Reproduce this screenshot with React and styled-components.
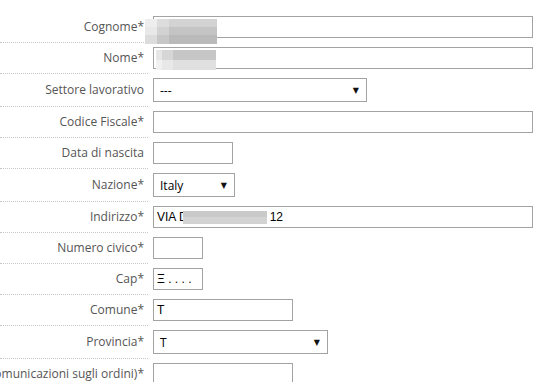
import React from 'react'
import styled, { createGlobalStyle } from 'styled-components'

const GlobalStyle = createGlobalStyle`
    html, body {
        margin: 0;
        padding: 0;
        background: #fff;
        overflow: hidden;
    }
    body {
        font-family: "Open Sans", "DejaVu Sans", sans-serif;
    }
`

const Form = styled.div`
    padding-top: 12px;
    width: 555px;
`

const Row = styled.div`
    display: grid;
    grid-template-columns: 148px 1fr;
`

const Label = styled.div`
    display: flex;
    align-items: center;
    justify-content: flex-end;
    overflow: hidden;
    white-space: nowrap;
    padding: 0 4px 1px 0;
    border-bottom: 1px dotted #c8c8c8;
    font-size: 12px;
    color: #555;
`

const Field = styled.div`
    position: relative;
    display: flex;
    align-items: center;
    padding: 4px 0 5px 5px;
`

const Input = styled.div`
    box-sizing: border-box;
    width: ${p => p.$w}px;
    height: 22px;
    border: 1px solid #a3a3a3;
    padding: 0 3px;
    display: flex;
    align-items: center;
    overflow: hidden;
    font-family: "Liberation Sans", Arial, sans-serif;
    font-size: 12px;
    color: #000;
    white-space: pre;
`

const Gap = styled.span`
    display: inline-block;
    width: ${p => p.$w}px;
`

const Select = styled.div`
    box-sizing: border-box;
    width: ${p => p.$w}px;
    height: 24px;
    border: 1px solid #a3a3a3;
    padding: 0 7px 0 6px;
    display: flex;
    align-items: center;
    justify-content: space-between;
    font-size: 12px;
    color: #000;
`

const Arrow = styled.span`
    font-size: 8px;
    line-height: 1;
    color: #111;
`

const Redact = styled.div`
    position: absolute;
    left: ${p => p.$x}px;
    top: ${p => p.$y}px;
    width: ${p => p.$w}px;
    height: ${p => p.$h}px;
    background: ${p => p.$bg};
`

const address = <>VIA D<Gap $w={82} />12</>

const rows = [
    { label: 'Cognome*', kind: 'input', w: 380, redact: { x: -3, y: 7, w: 72, h: 25, bg: 'linear-gradient(to bottom, rgba(255,255,255,0.25) 0 8px, rgba(0,0,0,0) 8px 16px, rgba(0,0,0,0.05) 16px), linear-gradient(to right, #e8e8e8 0 12px, #d2d2d2 12px 24px, #c4c4c4 24px)' } },
    { label: 'Nome*', kind: 'input', w: 380, redact: { x: 8, y: 7, w: 60, h: 20, bg: 'linear-gradient(to bottom, rgba(0,0,0,0) 0 10px, rgba(255,255,255,0.45) 10px), linear-gradient(to right, #e6e6e6 0 6px, #d6d6d6 6px 17px, #c6c6c6 17px)' } },
    { label: 'Settore lavorativo', kind: 'select', w: 214, value: '---' },
    { label: 'Codice Fiscale*', kind: 'input', w: 380 },
    { label: 'Data di nascita', kind: 'input', w: 80 },
    { label: 'Nazione*', kind: 'select', w: 82, value: 'Italy' },
    { label: 'Indirizzo*', kind: 'input', w: 380, value: address, redact: { x: 35, y: 9, w: 84, h: 13, bg: 'linear-gradient(to bottom, #c9c9c9 0 6px, #d3d3d3 6px)' } },
    { label: 'Numero civico*', kind: 'input', w: 50 },
    { label: 'Cap*', kind: 'input', w: 50, value: 'Ξ . . . .' },
    { label: 'Comune*', kind: 'input', w: 140, value: 'T' },
    { label: 'Provincia*', kind: 'select', w: 175, value: 'T' },
    { label: 'Telefono (per comunicazioni sugli ordini)*', kind: 'input', w: 140 },
]

export default function App() {
    return (
        <>
            <GlobalStyle />
            <Form>
                {rows.map(r => (
                    <Row key={r.label}>
                        <Label>{r.label}</Label>
                        <Field>
                            {r.kind === 'select' ? (
                                <Select $w={r.w}>
                                    <span>{r.value}</span>
                                    <Arrow>▼</Arrow>
                                </Select>
                            ) : (
                                <Input $w={r.w}>{r.value}</Input>
                            )}
                            {r.redact && (
                                <Redact $x={r.redact.x} $y={r.redact.y} $w={r.redact.w} $h={r.redact.h} $bg={r.redact.bg} />
                            )}
                        </Field>
                    </Row>
                ))}
            </Form>
        </>
    )
}
